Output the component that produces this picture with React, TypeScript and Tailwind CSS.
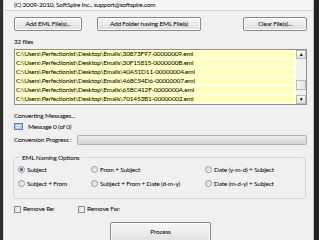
import React from "react";

const files = [
  "C:\\Users\\Perfectionist\\Desktop\\Emails\\30873F97-00000009.eml",
  "C:\\Users\\Perfectionist\\Desktop\\Emails\\30F15815-0000000B.eml",
  "C:\\Users\\Perfectionist\\Desktop\\Emails\\40A51D11-00000004.eml",
  "C:\\Users\\Perfectionist\\Desktop\\Emails\\468C54D6-00000007.eml",
  "C:\\Users\\Perfectionist\\Desktop\\Emails\\658C412F-0000000A.eml",
  "C:\\Users\\Perfectionist\\Desktop\\Emails\\701453B1-00000002.eml",
];

function Btn({ children, className }: { children: React.ReactNode; className: string }) {
  return (
    <div
      className={
        "flex items-center justify-center rounded-[2px] border border-[#8a8a8a] bg-gradient-to-b from-[#f6f6f6] via-[#ebebeb] to-[#dcdcdc] text-black shadow-[inset_0_0_0_1px_#fbfbfb] " +
        className
      }
    >
      {children}
    </div>
  );
}

function Radio({ checked }: { checked?: boolean }) {
  return (
    <div className="w-[7px] h-[7px] shrink-0 rounded-full border border-[#9a9a9a] bg-gradient-to-br from-[#d8d8d8] to-[#f8f8f8] flex items-center justify-center">
      {checked && <div className="w-[3px] h-[3px] rounded-full bg-[#2a62b8]" />}
    </div>
  );
}

function Check() {
  return <div className="w-[7px] h-[7px] shrink-0 border border-[#8f8f8f] bg-gradient-to-br from-[#dcdcdc] to-[#fafafa]" />;
}

export default function App() {
  return (
    <div
      className="w-[319px] h-[240px] overflow-hidden flex bg-[#f0f0f0] text-[6.5px] tracking-[-0.2px] text-black"
      style={{ fontFamily: 'Lato, "Open Sans", sans-serif' }}
    >
      <div className="w-[3px] bg-[#2e2e2e] shrink-0" />
      <div className="w-[1px] bg-[#d8d8d8] shrink-0" />
      <div className="flex-1 flex flex-col">
        <div className="h-[14px] leading-[10px] pl-[10px] bg-[#f5f5f5] border-b border-[#d4d4d4] whitespace-nowrap">
          (C) 2009-2010, SoftSpire Inc., support@softspire.com
        </div>
        <div className="pl-[10px] pr-[6px] flex flex-col">
          <div className="flex mt-[6px] h-[14px]">
            <Btn className="w-[68px]">Add EML File(s)...</Btn>
            <Btn className="w-[104px] ml-[15px]">Add Folder having EML File(s)</Btn>
            <Btn className="w-[64px] ml-auto">Clear File(s)...</Btn>
          </div>
          <div className="mt-[6px] leading-[10px] h-[12px]">32 files</div>
          <div className="h-[56px] border border-[#8c8f96] bg-white flex">
            <div className="flex-1 flex flex-col gap-[1px] pr-[1px]">
              {files.map((f) => (
                <div key={f} className="h-[8px] bg-[#ffffbf] leading-[8px] pl-[1px] whitespace-nowrap overflow-hidden">
                  {f}
                </div>
              ))}
            </div>
            <div className="w-[10px] bg-[#f0f0f0] flex flex-col">
              <div className="h-[9px] border border-[#b8b8b8] bg-gradient-to-b from-[#fbfbfb] to-[#e2e2e2] flex items-center justify-center text-[5px] leading-none">▲</div>
              <div className="h-[21px]" />
              <div className="h-[10px] border border-[#b8b8b8] bg-gradient-to-r from-[#f5f5f5] to-[#e4e4e4]" />
              <div className="flex-1" />
              <div className="h-[9px] border border-[#b8b8b8] bg-gradient-to-b from-[#fbfbfb] to-[#e2e2e2] flex items-center justify-center text-[5px] leading-none">▼</div>
            </div>
          </div>
          <div className="mt-[6px] h-[10px] leading-[10px]">Converting Messages...</div>
          <div className="flex items-center h-[11px]">
            <svg width="9" height="7" viewBox="0 0 9 7" className="shrink-0">
              <rect x="0.5" y="0.5" width="8" height="6" fill="#a9c8ea" stroke="#5d83b8" />
              <path d="M2 2.5 H7 M2 4.5 H6" stroke="#ffffff" strokeWidth="0.8" />
            </svg>
            <span className="ml-[5px] leading-[10px]">Message 0 (of 0)</span>
          </div>
          <div className="flex items-center mt-[3px] h-[10px]">
            <span className="w-[63px] shrink-0 leading-[10px] whitespace-nowrap">Conversion Progress :</span>
            <div className="flex-1 h-[10px] rounded-[2px] border border-[#b2b2b2] bg-gradient-to-b from-[#ececec] via-[#dedede] to-[#d2d2d2]" />
          </div>
          <div className="mt-[12px] relative h-[42px] -ml-[1px] mr-[1px] border border-[#d5d5d5] rounded-[3px]">
            <div className="absolute -top-[5px] left-[6px] px-[2px] bg-[#f0f0f0] leading-[9px]">EML Naming Options</div>
            <div className="grid grid-cols-[73px_114px_1fr] pl-[4px] pt-[8px] gap-y-[7px]">
              <div className="flex items-center gap-[2px]"><Radio checked /><span className="leading-[7px]">Subject</span></div>
              <div className="flex items-center gap-[2px]"><Radio /><span className="leading-[7px]">From + Subject</span></div>
              <div className="flex items-center gap-[2px]"><Radio /><span className="leading-[7px]">Date (y-m-d) + Subject</span></div>
              <div className="flex items-center gap-[2px]"><Radio /><span className="leading-[7px]">Subject + From</span></div>
              <div className="flex items-center gap-[2px]"><Radio /><span className="leading-[7px]">Subject + From + Date (d-m-y)</span></div>
              <div className="flex items-center gap-[2px]"><Radio /><span className="leading-[7px]">Date (m-d-y) + Subject</span></div>
            </div>
          </div>
          <div className="flex items-center mt-[6px] h-[8px]">
            <div className="flex items-center gap-[2px] w-[64px]"><Check /><span className="leading-[8px]">Remove Re:</span></div>
            <div className="flex items-center gap-[2px]"><Check /><span className="leading-[8px]">Remove Fw:</span></div>
          </div>
          <div className="flex mt-[9px]">
            <Btn className="w-[101px] h-[23px] ml-[96px] items-start pt-[4px]">Process</Btn>
          </div>
        </div>
      </div>
      <div className="w-[1px] bg-[#c4c4c4] shrink-0" />
      <div className="w-[5px] bg-[#1f2420] shrink-0" />
    </div>
  );
}
